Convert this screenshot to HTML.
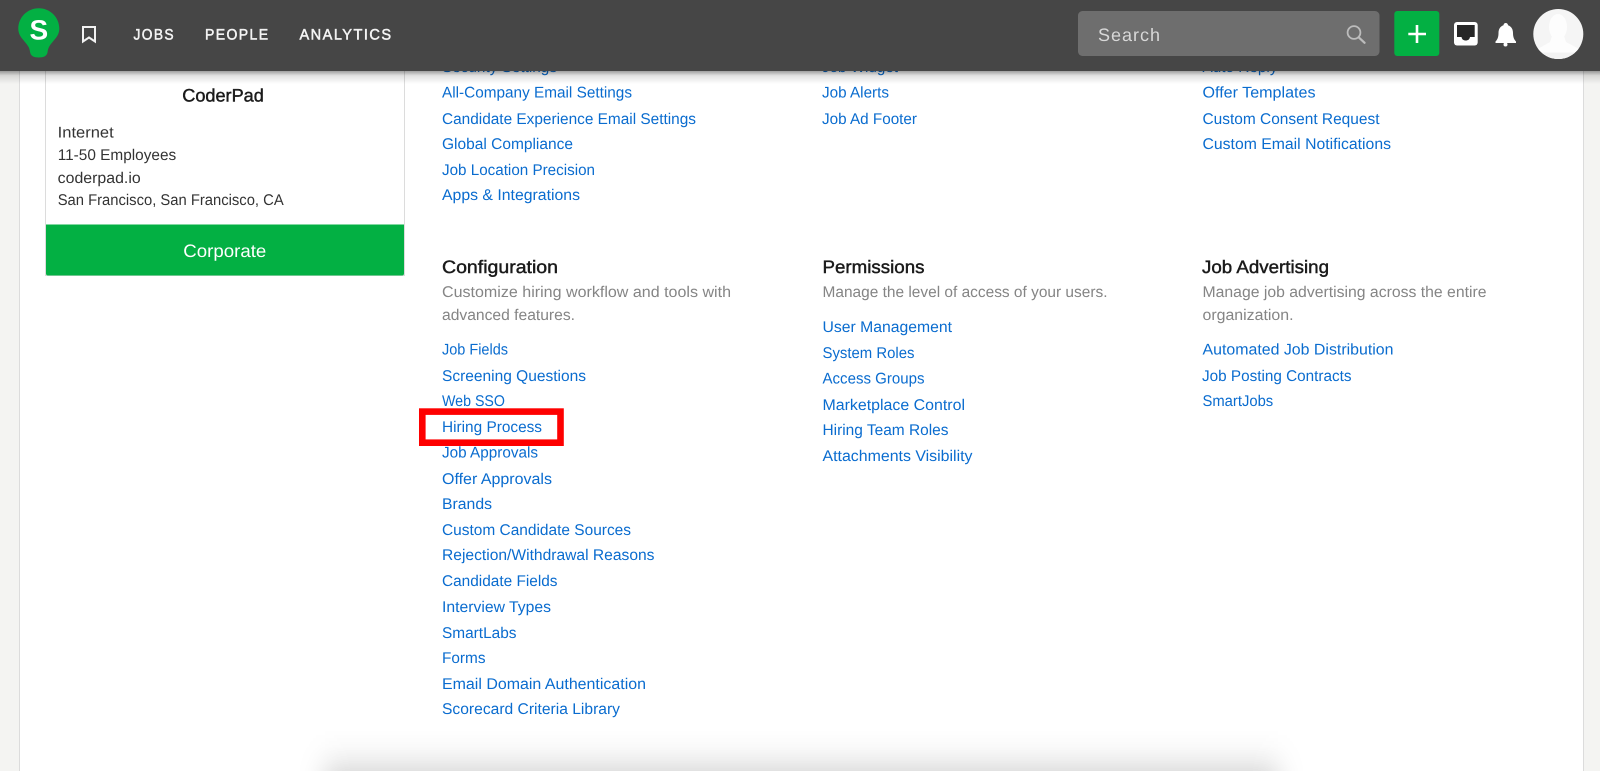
<!DOCTYPE html>
<html lang="en">
<head>
<meta charset="utf-8">
<title>Settings</title>
<style>
html,body{margin:0;padding:0;width:1600px;height:771px;overflow:hidden;background:#f4f4f2}
svg{display:block}
text{font-family:"Liberation Sans",Arial,sans-serif;text-rendering:geometricPrecision}
.l{font-size:15.5px;fill:#0a6ccf}
.d{font-size:15.5px;fill:#858585}
.h{font-size:18px;fill:#1a1a1a;stroke:#1a1a1a;stroke-width:.45px}
.t{font-size:15.5px;fill:#333}
.n{font-size:15px;letter-spacing:1.5px;fill:#f4f4f4;stroke:#f4f4f4;stroke-width:.5px}
</style>
</head>
<body>
<svg xmlns="http://www.w3.org/2000/svg" width="1600" height="771" viewBox="0 0 1600 771">
<defs>
<linearGradient id="ns" x1="0" y1="0" x2="0" y2="1">
<stop offset="0" stop-color="#000" stop-opacity=".38"/>
<stop offset=".35" stop-color="#000" stop-opacity=".12"/>
<stop offset="1" stop-color="#000" stop-opacity="0"/>
</linearGradient>
<linearGradient id="bg" x1="0" y1="0" x2="0" y2="1">
<stop offset="0" stop-color="#000" stop-opacity="0"/>
<stop offset=".4" stop-color="#000" stop-opacity=".02"/>
<stop offset=".7" stop-color="#000" stop-opacity=".06"/>
<stop offset="1" stop-color="#000" stop-opacity=".115"/>
</linearGradient>
<filter id="bs" filterUnits="userSpaceOnUse" x="200" y="725" width="1200" height="46"><feGaussianBlur stdDeviation="13 0"/></filter>
<clipPath id="av"><circle cx="1558.3" cy="34" r="25"/></clipPath>
</defs>

<!-- page -->
<rect x="0" y="0" width="1600" height="771" fill="#f4f4f2"/>
<rect x="20" y="0" width="1563" height="771" fill="#fff"/>
<path d="M19.5 0V771M1583.5 0V771" stroke="#dcdcdc" fill="none"/>

<!-- bottom shadow -->
<rect x="325" y="730" width="953" height="41" fill="url(#bg)" filter="url(#bs)"/>

<!-- company card -->
<rect x="45.5" y="60" width="359" height="215.5" fill="#fff" stroke="#dcdcdc"/>
<path d="M46 224.5H404V273.5a2 2 0 0 1-2 2H48a2 2 0 0 1-2-2Z" fill="#03b043"/>
<text x="182.3" y="101.5" class="h" textLength="81.5" lengthAdjust="spacingAndGlyphs">CoderPad</text>
<text x="57.7" y="137.7" class="t" textLength="56" lengthAdjust="spacingAndGlyphs">Internet</text>
<text x="57.7" y="160" class="t" textLength="118.5" lengthAdjust="spacingAndGlyphs">11-50 Employees</text>
<text x="57.7" y="183" class="t" textLength="83" lengthAdjust="spacingAndGlyphs">coderpad.io</text>
<text x="57.7" y="205" class="t" textLength="226" lengthAdjust="spacingAndGlyphs">San Francisco, San Francisco, CA</text>
<text x="183.3" y="257" font-size="18" fill="#fff" textLength="83" lengthAdjust="spacingAndGlyphs">Corporate</text>

<!-- column 1 -->
<text x="442" y="72" class="l" textLength="115" lengthAdjust="spacingAndGlyphs">Security Settings</text>
<text x="442" y="97.5" class="l" textLength="190" lengthAdjust="spacingAndGlyphs">All-Company Email Settings</text>
<text x="442" y="124" class="l" textLength="254" lengthAdjust="spacingAndGlyphs">Candidate Experience Email Settings</text>
<text x="442" y="149" class="l" textLength="131" lengthAdjust="spacingAndGlyphs">Global Compliance</text>
<text x="442" y="175" class="l" textLength="153" lengthAdjust="spacingAndGlyphs">Job Location Precision</text>
<text x="442" y="200" class="l" textLength="138" lengthAdjust="spacingAndGlyphs">Apps &amp; Integrations</text>
<text x="442" y="273" class="h" textLength="116" lengthAdjust="spacingAndGlyphs">Configuration</text>
<text x="442" y="297" class="d" textLength="289" lengthAdjust="spacingAndGlyphs">Customize hiring workflow and tools with</text>
<text x="442" y="320" class="d" textLength="133" lengthAdjust="spacingAndGlyphs">advanced features.</text>
<text x="442" y="354.5" class="l" textLength="66" lengthAdjust="spacingAndGlyphs">Job Fields</text>
<text x="442" y="381" class="l" textLength="144" lengthAdjust="spacingAndGlyphs">Screening Questions</text>
<text x="442" y="406" class="l" textLength="63" lengthAdjust="spacingAndGlyphs">Web SSO</text>
<text x="442" y="432" class="l" textLength="100" lengthAdjust="spacingAndGlyphs">Hiring Process</text>
<text x="442" y="457.5" class="l" textLength="96" lengthAdjust="spacingAndGlyphs">Job Approvals</text>
<text x="442" y="484" class="l" textLength="110" lengthAdjust="spacingAndGlyphs">Offer Approvals</text>
<text x="442" y="509" class="l" textLength="50" lengthAdjust="spacingAndGlyphs">Brands</text>
<text x="442" y="535" class="l" textLength="189" lengthAdjust="spacingAndGlyphs">Custom Candidate Sources</text>
<text x="442" y="560" class="l" textLength="212.5" lengthAdjust="spacingAndGlyphs">Rejection/Withdrawal Reasons</text>
<text x="442" y="586" class="l" textLength="115.5" lengthAdjust="spacingAndGlyphs">Candidate Fields</text>
<text x="442" y="612" class="l" textLength="109" lengthAdjust="spacingAndGlyphs">Interview Types</text>
<text x="442" y="638" class="l" textLength="74.5" lengthAdjust="spacingAndGlyphs">SmartLabs</text>
<text x="442" y="663" class="l" textLength="43.5" lengthAdjust="spacingAndGlyphs">Forms</text>
<text x="442" y="689" class="l" textLength="204" lengthAdjust="spacingAndGlyphs">Email Domain Authentication</text>
<text x="442" y="714" class="l" textLength="178" lengthAdjust="spacingAndGlyphs">Scorecard Criteria Library</text>

<!-- column 2 -->
<text x="822" y="72" class="l" textLength="76" lengthAdjust="spacingAndGlyphs">Job Widget</text>
<text x="822" y="97.5" class="l" textLength="67" lengthAdjust="spacingAndGlyphs">Job Alerts</text>
<text x="822" y="124" class="l" textLength="95" lengthAdjust="spacingAndGlyphs">Job Ad Footer</text>
<text x="822.5" y="273" class="h" textLength="102" lengthAdjust="spacingAndGlyphs">Permissions</text>
<text x="822.5" y="297" class="d" textLength="285" lengthAdjust="spacingAndGlyphs">Manage the level of access of your users.</text>
<text x="822.5" y="332" class="l" textLength="129.5" lengthAdjust="spacingAndGlyphs">User Management</text>
<text x="822.5" y="358" class="l" textLength="92" lengthAdjust="spacingAndGlyphs">System Roles</text>
<text x="822.5" y="383.5" class="l" textLength="102" lengthAdjust="spacingAndGlyphs">Access Groups</text>
<text x="822.5" y="410" class="l" textLength="142.5" lengthAdjust="spacingAndGlyphs">Marketplace Control</text>
<text x="822.5" y="435" class="l" textLength="126" lengthAdjust="spacingAndGlyphs">Hiring Team Roles</text>
<text x="822.5" y="461" class="l" textLength="150" lengthAdjust="spacingAndGlyphs">Attachments Visibility</text>

<!-- column 3 -->
<text x="1202.5" y="72" class="l" textLength="75" lengthAdjust="spacingAndGlyphs">Auto Reply</text>
<text x="1202.5" y="97.5" class="l" textLength="113" lengthAdjust="spacingAndGlyphs">Offer Templates</text>
<text x="1202.5" y="124" class="l" textLength="177" lengthAdjust="spacingAndGlyphs">Custom Consent Request</text>
<text x="1202.5" y="149" class="l" textLength="188.5" lengthAdjust="spacingAndGlyphs">Custom Email Notifications</text>
<text x="1202" y="273" class="h" textLength="127" lengthAdjust="spacingAndGlyphs">Job Advertising</text>
<text x="1202.5" y="297" class="d" textLength="284" lengthAdjust="spacingAndGlyphs">Manage job advertising across the entire</text>
<text x="1202.5" y="320" class="d" textLength="91" lengthAdjust="spacingAndGlyphs">organization.</text>
<text x="1202.5" y="354.5" class="l" textLength="191" lengthAdjust="spacingAndGlyphs">Automated Job Distribution</text>
<text x="1202" y="381" class="l" textLength="149.5" lengthAdjust="spacingAndGlyphs">Job Posting Contracts</text>
<text x="1202.5" y="406" class="l" textLength="70.7" lengthAdjust="spacingAndGlyphs">SmartJobs</text>

<!-- red highlight -->
<rect x="422.3" y="411.6" width="138.2" height="31.1" fill="none" stroke="#fe0000" stroke-width="6.6"/>

<!-- nav -->
<rect x="0" y="71" width="1600" height="13" fill="url(#ns)"/>
<rect x="0" y="0" width="1600" height="71" fill="#464646"/>

<path d="M38.8 8.3C50 8.3 59.3 17.3 59.3 28.7C59.3 37 52 41 49 47C47.8 49.5 47.8 51 47.5 52.5C46.8 56 43.5 57.5 38.8 57.5C34 57.5 30.8 56 30.2 52.5C29.8 51 29.8 49.5 28.6 47C25.5 41 18.3 37 18.3 28.7C18.3 17.3 27.5 8.3 38.8 8.3Z" fill="#03b043"/>
<text x="38.8" y="39.4" text-anchor="middle" font-size="28" font-weight="700" fill="#fff">S</text>

<path d="M83 27H95V41.5L89 37.5L83 41.5Z" fill="none" stroke="#f2f2f2" stroke-width="2" stroke-linejoin="miter"/>

<text x="133.5" y="39.3" class="n" textLength="41.5" lengthAdjust="spacingAndGlyphs">JOBS</text>
<text x="205" y="39.3" class="n" textLength="64.5" lengthAdjust="spacingAndGlyphs">PEOPLE</text>
<text x="299.5" y="39.3" class="n" textLength="93" lengthAdjust="spacingAndGlyphs">ANALYTICS</text>

<rect x="1078" y="11" width="301.5" height="45" rx="4.5" fill="#6e6e6e"/>
<text x="1098" y="41" font-size="18" fill="#d8d8d8" textLength="62" lengthAdjust="spacing">Search</text>
<circle cx="1354" cy="32.5" r="6.4" fill="none" stroke="#bcbcbc" stroke-width="1.8"/>
<path d="M1358.8 37.4L1364.6 42.8" stroke="#bcbcbc" stroke-width="2.2" stroke-linecap="round"/>

<rect x="1394.3" y="11" width="45" height="45" rx="3" fill="#03b043"/>
<path d="M1408.3 34H1426M1417 25V43" stroke="#fff" stroke-width="2.6"/>

<rect x="1454" y="22" width="23.7" height="23.5" rx="3" fill="#fff"/>
<path d="M1457 25H1474.7V37H1470C1469.5 39.5 1468 40.5 1465.8 40.5C1463.5 40.5 1462 39.5 1461.5 37H1457Z" fill="#262626"/>

<path d="M1505.7 23C1507 23 1508 24 1508 25.3C1511.5 26.5 1513 29.5 1513 33C1513 37 1514 39.5 1516 41.5V43H1495.5V41.5C1497.5 39.5 1498.5 37 1498.5 33C1498.5 29.5 1500 26.5 1503.5 25.3C1503.5 24 1504.5 23 1505.7 23Z" fill="#fff"/>
<circle cx="1505.5" cy="44.5" r="2" fill="#fff"/>

<circle cx="1558.3" cy="34" r="25" fill="#f5f5f5"/>
<g clip-path="url(#av)">
<ellipse cx="1558" cy="27" rx="9" ry="13" fill="#fdfdfd"/>
<path d="M1552 36L1550 42L1536 50V60H1581V50L1566 42L1564 36Z" fill="#fdfdfd"/>
<rect x="1530" y="52.5" width="56" height="8" fill="#f2f2f2"/>
</g>
</svg>
</body>
</html>
